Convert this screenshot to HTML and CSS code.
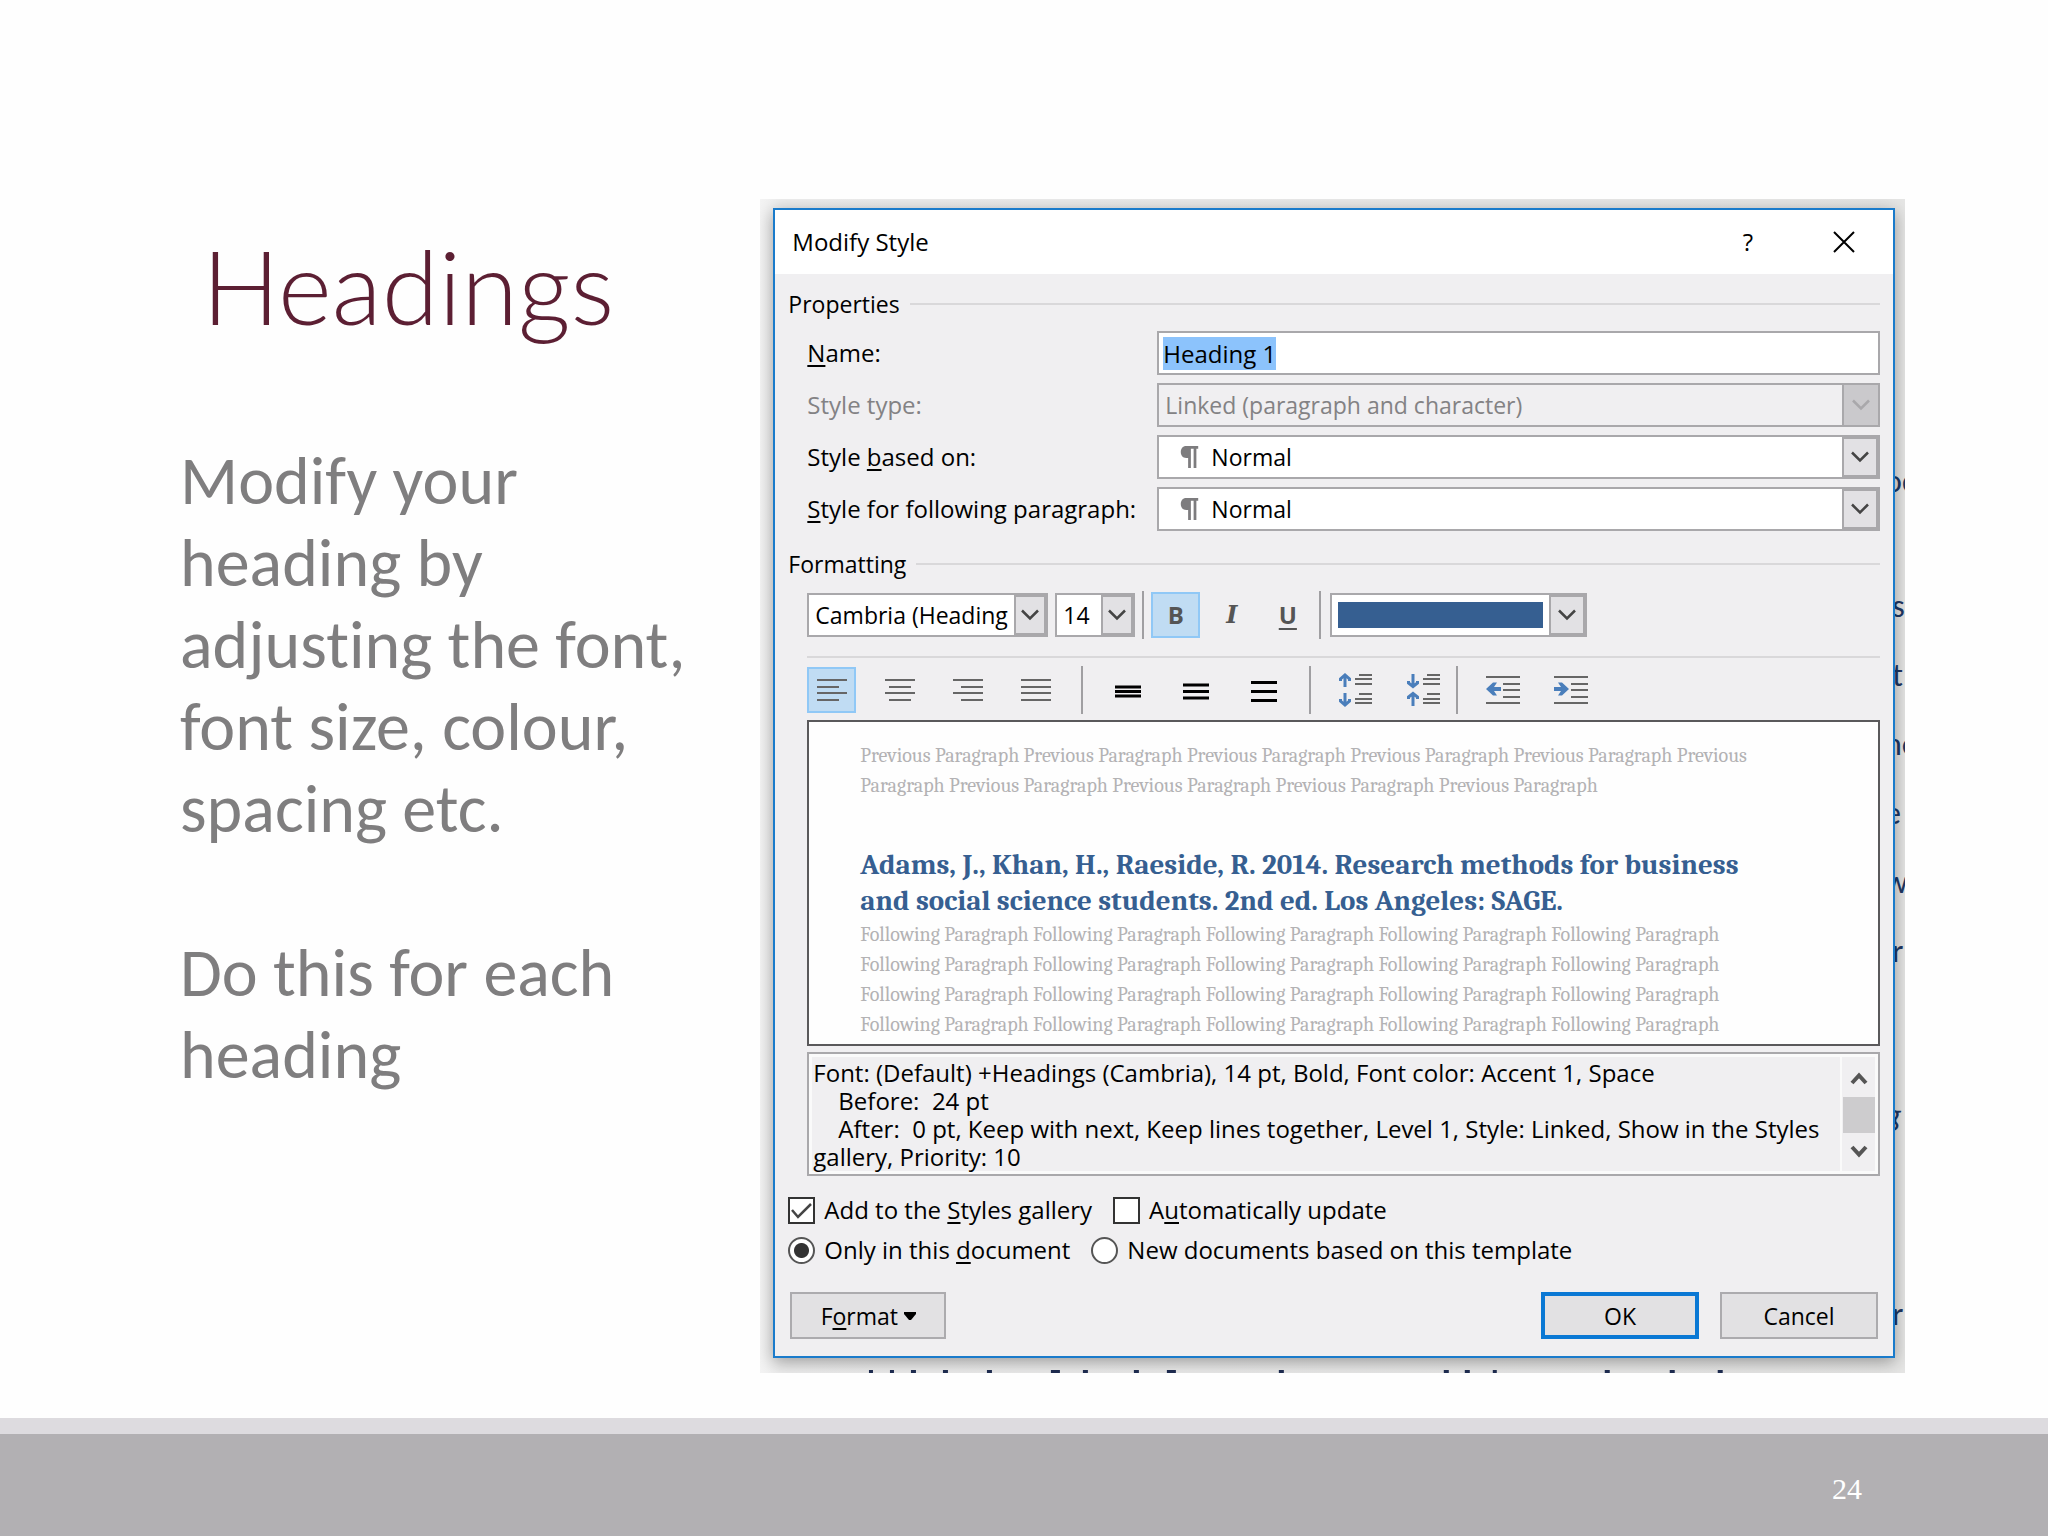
FILE: index.html
```html
<!DOCTYPE html>
<html lang="en">
<head>
<meta charset="utf-8">
<meta name="viewport" content="width=device-width, initial-scale=1">
<title>Headings</title>
<link rel="stylesheet" href="styles.css">
</head>
<body>
<svg class="defs" width="0" height="0" aria-hidden="true">
  <symbol id="chevron" viewBox="0 0 18 12"><path d="M1 1.500 9 9.500 17 1.500" fill="none" stroke="currentColor" stroke-width="2.500"/></symbol>
  <symbol id="pilcrow" viewBox="0 0 19 24"><path d="M19 0v3h-2v21h-3V3h-3v21H8V13H6C2 13 0 10 0 6.500S2 0 6 0z" fill="currentColor"/></symbol>
</svg>

<main class="slide">
  <section class="copy">
    <h1 class="copy-title">Headings</h1>
    <div class="copy-text">
      <p>Modify your heading by adjusting the font, font size, colour, spacing etc.</p>
      <p>Do this for each heading</p>
    </div>
  </section>

  <div class="figure">
    <div class="page-edge page-edge-top" aria-hidden="true">oc</div>
    <div class="page-edge page-edge-mid" aria-hidden="true">&nbsp;s<br>&nbsp;t<br>ne<br>e<br>w<br>&nbsp;r</div>
    <div class="page-edge page-edge-low" aria-hidden="true"><i>g</i></div>
    <div class="page-edge page-edge-end" aria-hidden="true">&nbsp;r</div>
    <svg class="page-foot" viewBox="0 0 1145 3" preserveAspectRatio="none" aria-hidden="true">
      <path fill="#1f2d52" d="M109 0h4v3h-4zM130 0h4v3h-4zM151 0h5v3h-5zM183 0h5v3h-5zM227 0h5v3h-5zM291 0h9v3h-9zM323 0h5v3h-5zM374 0h5v3h-5zM407 0h9v3h-9zM519 0h5v3h-5zM684 0h5v3h-5zM705 0h5v3h-5zM733 0h4v3h-4zM845 0h5v3h-5zM910 0h5v3h-5zM958 0h5v3h-5z"/>
    </svg>

    <form class="dialog">
      <header class="titlebar">
        <h2 class="titlebar-name">Modify Style</h2>
        <button type="button" class="titlebar-button" aria-label="Help">?</button>
        <button type="button" class="titlebar-button" aria-label="Close">
          <svg width="22" height="22" viewBox="0 0 22 22"><path d="M1 1 21 21M21 1 1 21" fill="none" stroke="#000" stroke-width="2"/></svg>
        </button>
      </header>

      <div class="dialog-body">
        <h3 class="section-name">Properties</h3>
        <div class="fields">
          <label for="name"><u>N</u>ame:</label>
          <input class="textbox" id="name" type="text" value="Heading 1">

          <label class="is-disabled" for="type">Style type:</label>
          <div class="combo combo-disabled">
            <select id="type" disabled><option>Linked (paragraph and character)</option></select>
            <span class="combo-arrow"><svg width="18" height="12"><use href="#chevron"/></svg></span>
          </div>

          <label for="based">Style <u>b</u>ased on:</label>
          <div class="combo combo-style">
            <select id="based"><option>Normal</option></select>
            <svg class="combo-mark" width="19" height="22"><use href="#pilcrow"/></svg>
            <span class="combo-arrow"><svg width="18" height="12"><use href="#chevron"/></svg></span>
          </div>

          <label for="following"><u>S</u>tyle for following paragraph:</label>
          <div class="combo combo-style">
            <select id="following"><option>Normal</option></select>
            <svg class="combo-mark" width="19" height="22"><use href="#pilcrow"/></svg>
            <span class="combo-arrow"><svg width="18" height="12"><use href="#chevron"/></svg></span>
          </div>
        </div>

        <h3 class="section-name section-formatting">Formatting</h3>
        <div class="toolbar toolbar-font">
          <div class="combo combo-font">
            <select aria-label="Font"><option>Cambria (Heading</option></select>
            <span class="combo-arrow"><svg width="18" height="12"><use href="#chevron"/></svg></span>
          </div>
          <div class="combo combo-size">
            <select aria-label="Font size"><option>14</option></select>
            <span class="combo-arrow"><svg width="18" height="12"><use href="#chevron"/></svg></span>
          </div>
          <span class="divider"></span>
          <button type="button" class="tool tool-bold is-on" aria-pressed="true">B</button>
          <button type="button" class="tool tool-italic">I</button>
          <button type="button" class="tool tool-underline">U</button>
          <span class="divider"></span>
          <div class="combo combo-color">
            <select aria-label="Font color"><option></option></select>
            <span class="swatch"></span>
            <span class="combo-arrow"><svg width="18" height="12"><use href="#chevron"/></svg></span>
          </div>
        </div>

        <div class="toolbar toolbar-paragraph">
          <button type="button" class="tool is-on" aria-label="Align left" aria-pressed="true"><svg width="30" height="24" viewBox="0 0 30 24"><path d="M0 2h30M0 9h22M0 15h30M0 22h22"/></svg></button>
          <button type="button" class="tool" aria-label="Center"><svg width="30" height="24" viewBox="0 0 30 24"><path d="M0 2h30M4 9h22M0 15h30M4 22h22"/></svg></button>
          <button type="button" class="tool" aria-label="Align right"><svg width="30" height="24" viewBox="0 0 30 24"><path d="M0 2h30M8 9h22M0 15h30M8 22h22"/></svg></button>
          <button type="button" class="tool" aria-label="Justify"><svg width="30" height="24" viewBox="0 0 30 24"><path d="M0 2h30M0 9h30M0 15h30M0 22h30"/></svg></button>
          <span class="divider"></span>
          <button type="button" class="tool tool-spacing" aria-label="Single spacing"><svg width="26" height="24" viewBox="0 0 26 24"><path d="M0 9h26M0 13.500h26M0 18h26"/></svg></button>
          <button type="button" class="tool tool-spacing" aria-label="1.5 spacing"><svg width="26" height="24" viewBox="0 0 26 24"><path d="M0 7h26M0 13.500h26M0 20h26"/></svg></button>
          <button type="button" class="tool tool-spacing" aria-label="Double spacing"><svg width="26" height="24" viewBox="0 0 26 24"><path d="M0 4.500h26M0 13.500h26M0 22.500h26"/></svg></button>
          <span class="divider"></span>
          <button type="button" class="tool" aria-label="Increase paragraph spacing"><svg width="34" height="34" viewBox="0 0 34 34"><path d="M20 2h13M16 6h17M16 11h17M20 21h13M16 26h17M16 30h17"/><path class="blue" d="M6 2v12M1.500 8V6L6 2l4.500 4v2M6 20v12M1.500 26v2L6 32l4.500-4v-2"/></svg></button>
          <button type="button" class="tool" aria-label="Decrease paragraph spacing"><svg width="34" height="34" viewBox="0 0 34 34"><path d="M20 2h13M16 6h17M16 11h17M20 21h13M16 26h17M16 30h17"/><path class="blue" d="M6 1v12M1.500 8v2L6 13.500l4.500-3.500V8M6 21v12M1.500 26v-2L6 20.500l4.500 3.500v2"/></svg></button>
          <span class="divider divider-tight"></span>
          <button type="button" class="tool" aria-label="Decrease indent"><svg width="34" height="30" viewBox="0 0 34 30"><path d="M0 2h34M17 9h17M17 15h17M17 22h17M0 28h34"/><path class="blue-fill" d="M0 14 7 7.500h4L8 12h7v4H8l3 4.500H7z"/></svg></button>
          <button type="button" class="tool" aria-label="Increase indent"><svg width="34" height="30" viewBox="0 0 34 30"><path d="M0 2h34M17 9h17M17 15h17M17 22h17M0 28h34"/><path class="blue-fill" d="M15 14 8 7.500H4L7 12H0v4h7l-3 4.500h4z"/></svg></button>
        </div>

        <div class="preview">
          <p class="preview-dim">Previous Paragraph Previous Paragraph Previous Paragraph Previous Paragraph Previous Paragraph Previous Paragraph Previous Paragraph Previous Paragraph Previous Paragraph Previous Paragraph</p>
          <p class="preview-sample">Adams, J., Khan, H., Raeside, R. 2014. Research methods for business and social science students. 2nd ed. Los Angeles: SAGE.</p>
          <p class="preview-dim">Following Paragraph Following Paragraph Following Paragraph Following Paragraph Following Paragraph Following Paragraph Following Paragraph Following Paragraph Following Paragraph Following Paragraph Following Paragraph Following Paragraph Following Paragraph Following Paragraph Following Paragraph Following Paragraph Following Paragraph Following Paragraph Following Paragraph Following Paragraph</p>
        </div>

        <div class="summary">
          <div class="summary-text">
            <p>Font: (Default) +Headings (Cambria), 14 pt, Bold, Font color: Accent 1, Space</p>
            <p class="summary-indent">Before:&nbsp; 24 pt</p>
            <p class="summary-indent">After:&nbsp; 0 pt, Keep with next, Keep lines together, Level 1, Style: Linked, Show in the Styles</p>
            <p>gallery, Priority: 10</p>
          </div>
          <div class="scrollbar" aria-hidden="true">
            <svg width="18" height="14" viewBox="0 0 18 14"><path d="M2 12 9 4.500 16 12" fill="none" stroke="#555" stroke-width="4"/></svg>
            <span class="scrollbar-thumb"></span>
            <svg width="18" height="14" viewBox="0 0 18 14"><path d="M2 2 9 9.500 16 2" fill="none" stroke="#555" stroke-width="4"/></svg>
          </div>
        </div>

        <div class="choices choices-first">
          <label class="choice"><input type="checkbox" checked><span>Add to the <u>S</u>tyles gallery</span></label>
          <label class="choice"><input type="checkbox"><span>A<u>u</u>tomatically update</span></label>
        </div>
        <div class="choices">
          <label class="choice"><input type="radio" name="scope" checked><span>Only in this <u>d</u>ocument</span></label>
          <label class="choice"><input type="radio" name="scope"><span>New documents based on this template</span></label>
        </div>

        <footer class="actions">
          <button type="button" class="button button-format"><span>F<u>o</u>rmat</span><svg width="12" height="8" viewBox="0 0 12 8"><path d="M0 0h12v2L7 8H5L0 2z"/></svg></button>
          <button type="button" class="button button-default">OK</button>
          <button type="button" class="button">Cancel</button>
        </footer>
      </div>
    </form>
  </div>
</main>
<footer class="slide-footer">24</footer>
<script src="script.js"></script>
</body>
</html>
```
FILE: styles.css
```css
* { box-sizing: border-box; }
h1, h2, h3, p { margin: 0; font-weight: inherit; font-size: inherit; }

body {
  margin: 0;
  min-height: 100vh;
  display: flex;
  flex-direction: column;
  background: #fefefe;
  font: 24px/32px "Open Sans", "Noto Sans", sans-serif;
  color: #000;
}

.defs { position: absolute; }
svg { display: block; flex: none; }
input, select, button { font: inherit; color: inherit; margin: 0; }
u { text-underline-offset: 3px; text-decoration-thickness: 2px; text-decoration-skip-ink: none; }

.slide {
  flex: 1;
  display: grid;
  grid-template-columns: minmax(0, 1fr) minmax(0, 2fr);
  gap: 8px;
  align-items: start;
  padding: 199px 143px 40px 180px;
}

.copy { padding: 30px 40px 0 0; }
.copy-title {
  padding-left: 22px;
  font: 300 103px/112px Lato, sans-serif;
  color: #5c1f33;
}
.copy-text {
  display: grid;
  gap: 82px;
  margin-top: 99px;
  font: 68px/82px Carlito, Calibri, Lato, sans-serif;
  font-variant-ligatures: none;
  color: #7f7e7f;
}

.slide-footer {
  padding: 39px 186px 31px;
  border-top: 16px solid #dddbdf;
  background: #b2b0b3;
  color: #fff;
  text-align: right;
  font: 30px/32px "Liberation Serif", serif;
}

/* Screenshot of the dialog over a document page */
.figure {
  position: relative;
  overflow: hidden;
  padding: 9px 10px 15px 13px;
  background: linear-gradient(to right, #f4f4f4, #eeeeee 20px, #e6e6e5);
}
.page-edge {
  position: absolute;
  right: 0;
  width: 20px;
  font: 32px/69px Carlito, Calibri, sans-serif;
  color: #1f3864;
  white-space: nowrap;
}
.page-edge-top { top: 248px; }
.page-edge-mid { top: 373px; }
.page-edge-low { top: 882px; }
.page-edge-end { top: 1081px; }
.page-foot { position: absolute; left: 0; bottom: 0; width: 100%; height: 3px; }

.dialog {
  position: relative;
  border: 2px solid #1a7bcb;
  background: #f0eff1;
  box-shadow: 0 4px 16px rgba(0, 0, 0, .35);
}

.titlebar { display: flex; align-items: center; height: 64px; padding: 0 25px 0 17px; background: #fff; }
.titlebar-name { flex: 1; }
.titlebar-button {
  display: grid;
  place-items: center;
  width: 48px;
  height: 48px;
  padding: 0;
  border: 0;
  background: none;
}
.titlebar-button + .titlebar-button { margin-left: 48px; }

.dialog-body { padding: 14px 13px 17px 13px; }

.section-name { display: flex; align-items: center; gap: 10px; margin-bottom: 11px; font-size: 23px; }
.section-name::after { content: ""; flex: 1; height: 2px; background: #d9d8da; }
.section-formatting { margin-top: 17px; }

.fields {
  display: grid;
  grid-template-columns: 350px minmax(0, 1fr);
  grid-auto-rows: 44px;
  row-gap: 8px;
  align-items: center;
  padding-left: 19px;
}
.is-disabled { color: #838284; }

.textbox {
  width: 100%;
  height: 44px;
  padding: 0 4px;
  border: 2px solid #a9a8ab;
  border-radius: 0;
  background: #fff;
  outline: none;
}
.textbox::selection { background: #8cc3fc; color: #000; }

/* Drop-down: select, marks and arrow box share one grid row */
.combo {
  display: grid;
  grid-template-columns: minmax(0, 1fr) 38px;
  height: 44px;
  align-items: center;
}
.combo select {
  grid-area: 1 / 1 / 2 / 3;
  width: 100%;
  height: 44px;
  padding: 0 42px 0 6px;
  border: 2px solid #a9a8ab;
  border-radius: 0;
  background: #fff;
  font-size: 23px;
  appearance: none;
  opacity: 1;
}
.combo-arrow {
  grid-area: 1 / 2;
  display: grid;
  place-items: center;
  height: 44px;
  border: 4px solid #a9a8ab;
  border-left-width: 2px;
  background: #e2e1e4;
  color: #444;
  pointer-events: none;
}
.combo-disabled select { background: #f0eff1; color: #838284; }
.combo-disabled .combo-arrow { border-width: 2px; background: #cac9cc; color: #a9a8ab; }
.combo-style select { padding-left: 52px; }
.combo-mark { grid-area: 1 / 1; margin-left: 23px; color: #7d7c7e; pointer-events: none; }

.toolbar { display: flex; align-items: center; height: 48px; margin-left: 19px; }
.toolbar-font { gap: 7px; }
.combo-font { width: 241px; grid-template-columns: minmax(0, 1fr) 34px; }
.combo-font select, .combo-size select { padding-right: 0; }
.combo-size { width: 80px; grid-template-columns: minmax(0, 1fr) 34px; }
.combo-color { width: 257px; margin-left: 2px; }
.swatch { grid-area: 1 / 1; height: 26px; margin: 0 6px 0 8px; background: #365f91; pointer-events: none; }

.divider { width: 2px; height: 48px; background: #a09fa2; }

.tool {
  display: grid;
  place-items: center;
  width: 49px;
  height: 46px;
  padding: 0;
  border: 2px solid transparent;
  background: none;
  color: #555;
}
.tool.is-on { border-color: #90c8f6; background: #c0dcf3; }
.tool svg path { fill: none; stroke: #666; stroke-width: 2; }
.tool svg .blue { stroke: #4a7ebb; stroke-width: 3; }
.tool svg .blue-fill { fill: #4a7ebb; stroke: none; }
.tool-spacing svg path { stroke: #000; stroke-width: 3; }
.tool-bold { font-weight: 700; }
.tool-italic { font-family: "DejaVu Serif", serif; font-style: italic; font-weight: 700; }
.tool-underline { font-weight: 700; text-decoration: underline; text-decoration-thickness: 2px; text-underline-offset: 4px; }

.toolbar-paragraph {
  position: relative;
  gap: 19px;
  margin-top: 27px;
}
.toolbar-paragraph::before {
  content: "";
  position: absolute;
  inset: -10px 0 auto;
  height: 2px;
  background: #d9d8da;
}
.toolbar-paragraph .divider { margin: 0 1px 0 2px; }
.toolbar-paragraph .divider-tight { margin-left: -11px; }

.preview {
  height: 326px;
  margin: 6px 0 0 19px;
  padding: 19px 100px 0 51px;
  border: 2px solid #5a595b;
  background: #fefefe;
  overflow: hidden;
  font-family: Caladea, Cambria, "Liberation Serif", serif;
}
.preview-dim { font-size: 20px; line-height: 30px; color: #b3b2b4; }
.preview-sample { margin: 46px 0 1px; font-size: 29px; line-height: 36px; font-weight: 700; color: #365f91; }

.summary {
  display: flex;
  height: 124px;
  margin: 6px 0 0 19px;
  padding: 3px 0 3px 3px;
  border: 2px solid #a9a8ab;
  background: #f0eff1;
  box-shadow: inset 0 0 0 3px #fafafa;
  line-height: 28px;
}
.summary-text { flex: 1; min-width: 0; padding: 2px 0 0 1px; white-space: nowrap; }
.summary-indent { padding-left: 25px; }
.scrollbar {
  display: flex;
  flex-direction: column;
  align-items: center;
  justify-content: space-between;
  width: 38px;
  padding: 14px 3px 12px 0;
  border-left: 2px solid #fafafa;
}
.scrollbar-thumb { width: 32px; height: 36px; background: #cdccce; }

.choices { display: flex; gap: 21px; height: 28px; margin-top: 12px; }
.choices-first { margin-top: 20px; }
.choice { display: flex; align-items: center; gap: 9px; }
.choice input {
  appearance: none;
  width: 27px;
  height: 27px;
  border: 2px solid #333;
  background: #fff;
}
.choice input[type="radio"] { border-radius: 50%; border-color: #555; }
.choice input[type="radio"]:checked { background: radial-gradient(circle, #333 7px, #fff 8px); }
.choice input[type="checkbox"]:checked {
  background: #fff url("data:image/svg+xml,%3Csvg xmlns='http://www.w3.org/2000/svg' viewBox='0 0 23 23'%3E%3Cpath d='M2 11l6 7L21 5' fill='none' stroke='%23444' stroke-width='2.500'/%3E%3C/svg%3E") center / 100%;
}

.actions { display: flex; gap: 21px; margin: 28px 2px 0; }
.button {
  display: flex;
  align-items: center;
  justify-content: center;
  gap: 6px;
  width: 158px;
  height: 47px;
  padding: 0;
  border: 2px solid #acabae;
  background: #e2e1e3;
  font-size: 23px;
}
.button-format { width: 156px; margin-right: auto; }
.button-default { border: 4px solid #0a78d4; }
```
FILE: script.js
```js
// The style name is selected when the dialog opens
const nameBox = document.getElementById('name');
nameBox.focus();
nameBox.select();
```
